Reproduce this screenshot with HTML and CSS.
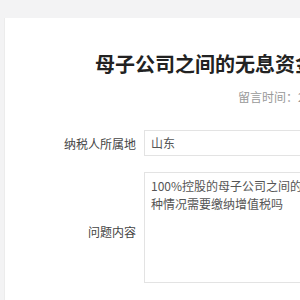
FILE: index.html
```html
<!DOCTYPE html>
<html lang="zh-CN">
<head>
  <meta charset="UTF-8" />
  <meta name="viewport" content="width=device-width, initial-scale=1.0" />
  <title>留言详情</title>
  <link rel="stylesheet" href="styles.css">
</head>
<body>
  <div class="card">
    <h1 class="title">母子公司之间的无息资金借贷是否需要缴纳增值税</h1>
    <div class="meta">留言时间：2023-05-16 10:24</div>

    <div class="form">
      <div class="row">
        <div class="label">纳税人所属地</div>
        <div class="field">山东</div>
      </div>
      <div class="row">
        <div class="label label-area">问题内容</div>
        <div class="field area">100%控股的母子公司之间的无息资金借贷，这种情况需要缴纳增值税吗</div>
      </div>
    </div>
  </div>
</body>
</html>
```

FILE: styles.css
```css
* {
  margin: 0;
  padding: 0;
  box-sizing: border-box;
}

html, body {
  height: 100%;
  overflow: hidden;
}

body {
  background: #f3f3f4;
  font-family: "Microsoft YaHei", "Noto Sans CJK SC", sans-serif;
  color: #333;
}

.card {
  width: 900px;
  min-height: 400px;
  margin: 18px 0 0 4px;
  padding-top: 32px;
  background: #fff;
  border-left: 1px solid #ececec;
}

.title {
  padding-left: 90px;
  font-size: 20px;
  line-height: 28px;
  font-weight: bold;
  color: #222;
}

.meta {
  margin-top: 10px;
  padding-left: 233px;
  font-size: 12px;
  line-height: 18px;
  color: #999;
}

.form {
  margin-top: 24px;
  display: flex;
  flex-direction: column;
  gap: 16px;
}

.row {
  display: flex;
  align-items: center;
  gap: 8px;
}

.label {
  width: 131px;
  text-align: right;
  font-size: 12px;
  color: #444;
}

.label-area {
  padding-top: 7px;
}

.field {
  width: 420px;
  height: 26px;
  padding: 0 6px;
  border: 1px solid #e3e3e3;
  font-size: 12px;
  line-height: 24px;
  color: #555;
}

.field.area {
  width: 266px;
  height: 111px;
  padding: 4px 6px;
  line-height: 18px;
}
```
